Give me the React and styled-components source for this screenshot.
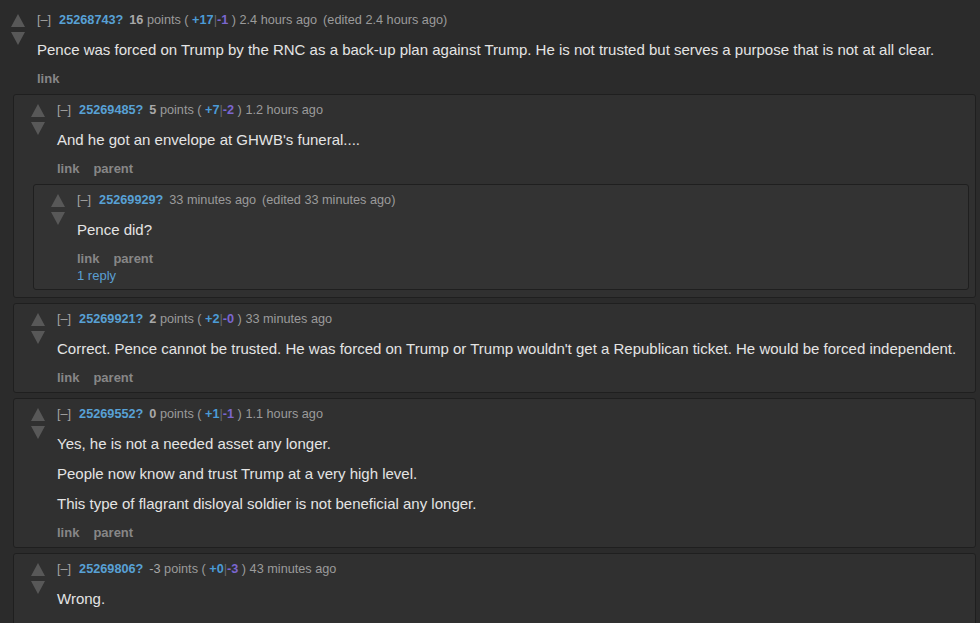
import React from 'react';
import styled, { createGlobalStyle } from 'styled-components';

const GlobalStyle = createGlobalStyle`
  html, body {
    margin: 0;
    padding: 0;
    background: #2b2b2b;
  }
  body {
    font-family: "Liberation Sans", Arial, Helvetica, sans-serif;
    color: #e2e2e2;
  }
`;

const Page = styled.div`
  padding: 4px 3px 0 0;
  overflow: hidden;
  height: 623px;
  box-sizing: border-box;
`;

const Box = styled.div`
  border: 1px solid ${p => (p.$boxed ? '#1f1f1f' : 'transparent')};
  border-radius: 3px;
  background: ${p => (p.$boxed ? (p.$nested ? '#333333' : '#303030') : 'transparent')};
  padding: 7px ${p => (p.$boxed ? '6px' : '0')} 6px ${p => (p.$boxed ? '7px' : '0')};
  margin-top: ${p => (p.$first ? '0' : '5px')};
`;

const Row = styled.div`
  display: flex;
  align-items: flex-start;
`;

const Votes = styled.div`
  display: flex;
  flex-direction: column;
  gap: 5px;
  width: 14px;
  margin: 2px 12px 0 10px;
  flex-shrink: 0;
`;

const Arrow = styled.div`
  width: 0;
  height: 0;
  border-left: 7px solid transparent;
  border-right: 7px solid transparent;
  ${p => (p.$down ? 'border-top' : 'border-bottom')}: 13px solid #585858;
`;

const Entry = styled.div`
  flex: 1;
  min-width: 0;
`;

const Tagline = styled.div`
  font-size: 12.7px;
  line-height: 16px;
  color: #9b9b9b;
  white-space: nowrap;
`;

const Toggle = styled.span`
  color: #a3a3a3;
  margin-right: 8px;
`;

const Author = styled.span`
  color: #58a1d6;
  font-weight: bold;
  margin-right: 6px;
`;

const Score = styled.b`
  color: #a8a8a8;
  font-weight: ${p => (p.$neg ? 'normal' : 'bold')};
`;

const Up = styled.b`
  color: #4b9bd6;
`;

const Down = styled.b`
  color: #7b66cf;
`;

const Sep = styled.span`
  color: #6a6a6a;
`;

const Edited = styled.span`
  margin-left: 6px;
`;

const Body = styled.div`
  margin: 12px 0 11px;
  font-size: 15px;
  line-height: 20px;
  color: #e4e4e4;

  p {
    margin: 0;
  }
  p + p {
    margin-top: 10px;
  }
`;

const Buttons = styled.div`
  display: flex;
  gap: 14px;
  font-size: 13px;
  line-height: 16px;
  font-weight: bold;
  color: #878787;
`;

const Replies = styled.div`
  margin-top: 2px;
  font-size: 13px;
  line-height: 14px;
  color: #5b9fd2;
`;

const Children = styled.div`
  margin: 7px 0 1px 12px;
`;

const comments = [
  {
    id: '25268743?',
    score: '16',
    up: '+17',
    down: '-1',
    time: '2.4 hours ago',
    edited: '(edited 2.4 hours ago)',
    body: [
      'Pence was forced on Trump by the RNC as a back-up plan against Trump. He is not trusted but serves a purpose that is not at all clear.',
    ],
    buttons: ['link'],
    children: [
      {
        id: '25269485?',
        score: '5',
        up: '+7',
        down: '-2',
        time: '1.2 hours ago',
        body: ["And he got an envelope at GHWB's funeral...."],
        buttons: ['link', 'parent'],
        children: [
          {
            id: '25269929?',
            time: '33 minutes ago',
            edited: '(edited 33 minutes ago)',
            body: ['Pence did?'],
            buttons: ['link', 'parent'],
            replies: '1 reply',
          },
        ],
      },
      {
        id: '25269921?',
        score: '2',
        up: '+2',
        down: '-0',
        time: '33 minutes ago',
        body: [
          "Correct. Pence cannot be trusted. He was forced on Trump or Trump wouldn't get a Republican ticket. He would be forced independent.",
        ],
        buttons: ['link', 'parent'],
      },
      {
        id: '25269552?',
        score: '0',
        up: '+1',
        down: '-1',
        time: '1.1 hours ago',
        body: [
          'Yes, he is not a needed asset any longer.',
          'People now know and trust Trump at a very high level.',
          'This type of flagrant disloyal soldier is not beneficial any longer.',
        ],
        buttons: ['link', 'parent'],
      },
      {
        id: '25269806?',
        score: '-3',
        up: '+0',
        down: '-3',
        time: '43 minutes ago',
        body: ['Wrong.'],
        buttons: ['link', 'parent'],
      },
    ],
  },
];

function Comment({ c, depth, first }) {
  const boxed = depth > 0;
  return (
    <Box $boxed={boxed} $nested={depth > 1} $first={first}>
      <Row>
        <Votes>
          <Arrow />
          <Arrow $down />
        </Votes>
        <Entry>
          <Tagline>
            <Toggle>[–]</Toggle>
            <Author>{c.id}</Author>
            {c.score !== undefined && (
              <>
                <Score $neg={c.score.startsWith('-')}>{c.score}</Score> points ({' '}
                <Up>{c.up}</Up>
                <Sep>|</Sep>
                <Down>{c.down}</Down> ){' '}
              </>
            )}
            {c.time}
            {c.edited && <Edited>{c.edited}</Edited>}
          </Tagline>
          <Body>
            {c.body.map((t, i) => (
              <p key={i}>{t}</p>
            ))}
          </Body>
          <Buttons>
            {c.buttons.map(b => (
              <span key={b}>{b}</span>
            ))}
          </Buttons>
          {c.replies && <Replies>{c.replies}</Replies>}
        </Entry>
      </Row>
      {c.children && (
        <Children>
          {c.children.map((ch, i) => (
            <Comment key={ch.id} c={ch} depth={depth + 1} first={i === 0} />
          ))}
        </Children>
      )}
    </Box>
  );
}

export default function App() {
  return (
    <>
      <GlobalStyle />
      <Page>
        {comments.map((c, i) => (
          <Comment key={c.id} c={c} depth={0} first={i === 0} />
        ))}
      </Page>
    </>
  );
}
